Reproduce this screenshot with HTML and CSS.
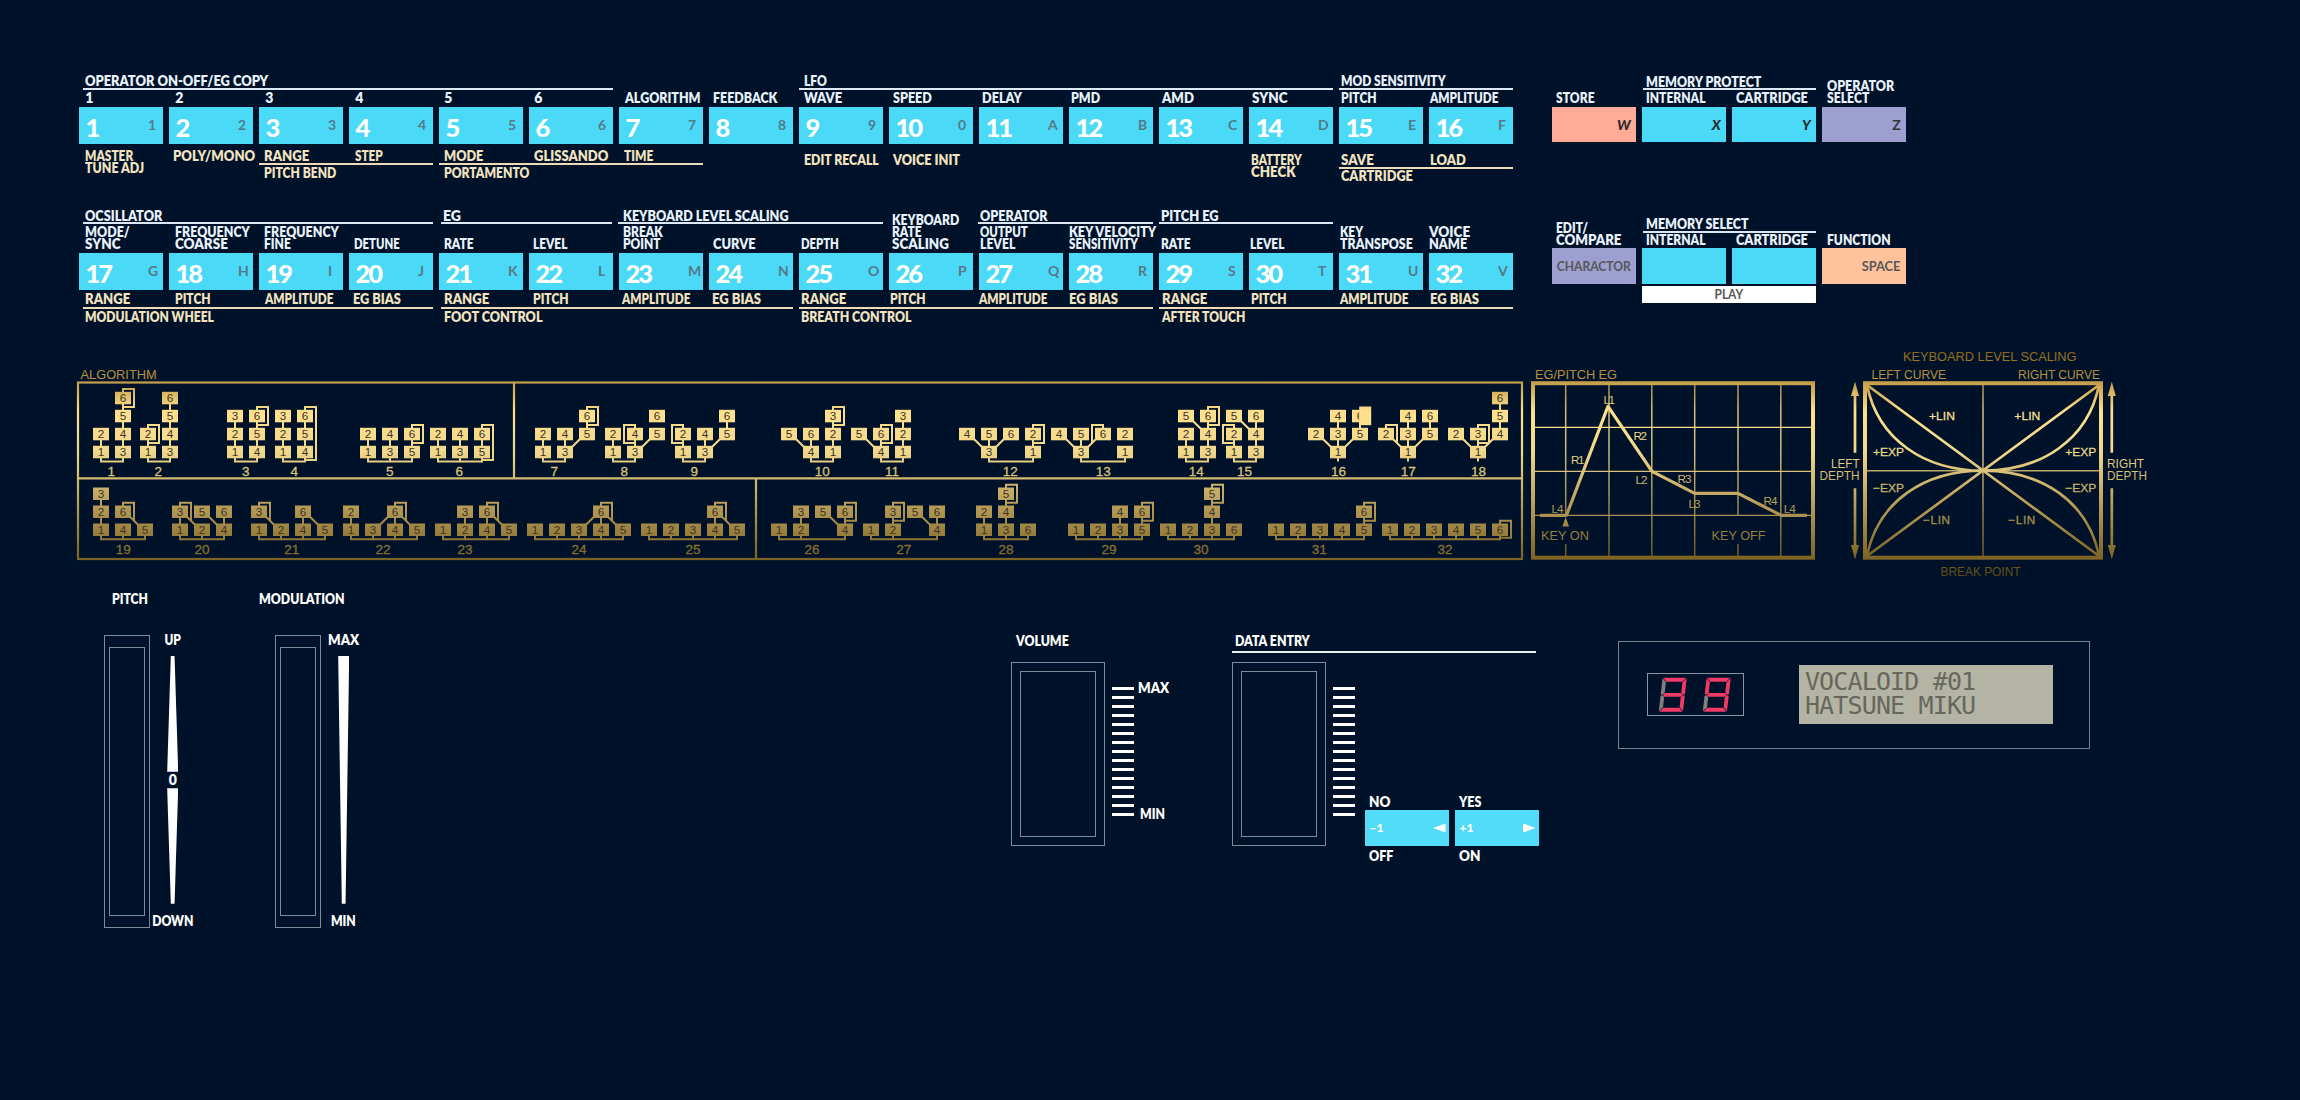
FILE: index.html
```html
<!DOCTYPE html>
<html lang="en">
<head>
<meta charset="utf-8">
<title>Synth panel</title>
<link rel="stylesheet" href="styles.css">
</head>
<body>
<main class="panel">
  <section class="controls">
    <div class="bank">
      <div class="row row-1" id="row1"></div>
      <div class="row row-2" id="row2"></div>
    </div>
    <div class="side">
      <div class="row side-1">
        <div class="strip heads">
          <div class="group g-2-3"><span class="t" data-w="113.7">MEMORY PROTECT</span></div>
        </div>
        <div class="strip labels">
          <div class="cell c1"><span class="t" data-w="37.3">STORE</span></div>
          <div class="cell c2"><span class="t" data-w="57.7">INTERNAL</span></div>
          <div class="cell c3"><span class="t" data-w="70.3">CARTRIDGE</span></div>
          <div class="cell c4"><span class="t" data-w="65.3">OPERATOR</span><span class="t" data-w="41">SELECT</span></div>
        </div>
        <div class="strip keys">
          <button class="key salmon"><span class="code slant">W</span></button>
          <button class="key"><span class="code slant">X</span></button>
          <button class="key"><span class="code slant">Y</span></button>
          <button class="key violet"><span class="code dark">Z</span></button>
        </div>
      </div>
      <div class="row side-2">
        <div class="strip heads">
          <div class="group g-2-3"><span class="t" data-w="101.3">MEMORY SELECT</span></div>
        </div>
        <div class="strip labels">
          <div class="cell c1"><span class="t" data-w="30">EDIT/</span><span class="t" data-w="63.7">COMPARE</span></div>
          <div class="cell c2"><span class="t" data-w="57.7">INTERNAL</span></div>
          <div class="cell c3"><span class="t" data-w="70.3">CARTRIDGE</span></div>
          <div class="cell c4"><span class="t" data-w="62.3">FUNCTION</span></div>
        </div>
        <div class="strip keys">
          <button class="key violet"><span class="code" data-w="72.7">CHARACTOR</span></button>
          <button class="key"></button>
          <button class="key"></button>
          <button class="key peach"><span class="code" data-w="36.7">SPACE</span></button>
        </div>
        <div class="play"><span class="code" data-w="27.3">PLAY</span></div>
      </div>
    </div>
  </section>

  <section class="charts">
    <svg class="chart" id="algorithms" width="1450" height="240" viewBox="76 345 1450 240">
      <defs>
        <linearGradient id="gold" gradientUnits="userSpaceOnUse" x1="0" y1="345" x2="0" y2="575">
          <stop offset="0" stop-color="#7d5a0a"/>
          <stop offset=".17" stop-color="#c8a24e"/>
          <stop offset=".29" stop-color="#ffe08c"/>
          <stop offset=".46" stop-color="#f2d88c"/>
          <stop offset=".94" stop-color="#7a6022"/>
          <stop offset="1" stop-color="#5f4712"/>
        </linearGradient>
      </defs>
      <text class="gt" x="80.6" y="378.7" textLength="76" lengthAdjust="spacingAndGlyphs">ALGORITHM</text>
      <g class="frame">
        <rect x="78" y="382.5" width="1444" height="176.5"/>
        <path d="M78 478.3H1522M514 382V478M756 478V559"/>
      </g>
    </svg>
    <svg class="chart" width="290" height="240" viewBox="1526 345 290 240">
      <g class="frame thick"><rect x="1533" y="383.2" width="280" height="174.5"/></g>
      <path class="grid" d="M1565.7 385V515M1565.7 544V556M1609 385V556M1651.8 385V556M1694.7 385V556M1738 385V515M1738 544V556M1780.8 385V556"/>
      <path class="grid fine" d="M1535 427.3H1811M1535 471.3H1811M1535 515.3H1811"/>
      <path class="curve" d="M1540 515.3H1566.5L1608 406.3L1652 471.3L1694.7 493.3H1738L1781 515.3H1807"/>
      <path class="solid" d="M1565.7 517L1569 526.5H1562.4Z"/>
      <text class="gt" x="1535" y="378.7" textLength="82" lengthAdjust="spacingAndGlyphs">EG/PITCH EG</text>
      <text class="gs" x="1571" y="464" textLength="13.5">R1</text>
      <text class="gs" x="1603.5" y="403.5" textLength="11.5">L1</text>
      <text class="gs" x="1633.5" y="439.6" textLength="13.5">R2</text>
      <text class="gs" x="1635.5" y="484" textLength="12">L2</text>
      <text class="gs" x="1677.5" y="482.7" textLength="14">R3</text>
      <text class="gs" x="1688.5" y="507.6" textLength="12">L3</text>
      <text class="gs" x="1763.5" y="505" textLength="14">R4</text>
      <text class="gs" x="1551.5" y="513" textLength="12">L4</text>
      <text class="gs" x="1783.7" y="513" textLength="12">L4</text>
      <text class="gt" x="1541" y="539.7" textLength="48" lengthAdjust="spacingAndGlyphs">KEY ON</text>
      <text class="gt" x="1711.5" y="539.7" textLength="54" lengthAdjust="spacingAndGlyphs">KEY OFF</text>
    </svg>
    <svg class="chart" width="334" height="240" viewBox="1816 345 334 240">
      <g class="frame thick"><rect x="1865" y="383.2" width="236" height="174.5"/></g>
      <path class="grid" d="M1983 385V556M1867 470.7H2099"/>
      <path class="curve lin" d="M1867 385L2099 556M2099 385L1867 556"/>
      <path class="curve lin" d="M1867 385C1878 440 1925 470.7 1983 470.7C2041 470.7 2088 440 2099 385M1867 556C1878 501 1925 470.7 1983 470.7C2041 470.7 2088 501 2099 556"/>
      <path class="curve lin" d="M1855 394V452.7M1855 488.3V547M2111.8 394V452.7M2111.8 488.3V547"/>
      <path class="solid" d="M1855 381.5L1859 396H1851ZM1855 559.5L1859 545H1851ZM2111.8 381.5L2115.8 396H2107.8ZM2111.8 559.5L2115.8 545H2107.8Z"/>
      <text class="gt" x="1903" y="360.7" textLength="173.5" lengthAdjust="spacingAndGlyphs">KEYBOARD LEVEL SCALING</text>
      <text class="gt" x="1871.5" y="378.7" textLength="74.5" lengthAdjust="spacingAndGlyphs">LEFT CURVE</text>
      <text class="gt" x="2018" y="378.7" textLength="82" lengthAdjust="spacingAndGlyphs">RIGHT CURVE</text>
      <text class="gs em" x="1929" y="420.3" textLength="26" lengthAdjust="spacingAndGlyphs">+LIN</text>
      <text class="gs em" x="2014.3" y="420.3" textLength="26" lengthAdjust="spacingAndGlyphs">+LIN</text>
      <text class="gs em" x="1873" y="456" textLength="31" lengthAdjust="spacingAndGlyphs">+EXP</text>
      <text class="gs em" x="2065.3" y="456" textLength="31" lengthAdjust="spacingAndGlyphs">+EXP</text>
      <text class="gs em" x="1873" y="492" textLength="31" lengthAdjust="spacingAndGlyphs">−EXP</text>
      <text class="gs em" x="2065.3" y="492" textLength="31" lengthAdjust="spacingAndGlyphs">−EXP</text>
      <text class="gs em" x="1923" y="523.7" textLength="27">−LIN</text>
      <text class="gs em" x="2008.3" y="523.7" textLength="27">−LIN</text>
      <text class="gt" x="1831" y="467.7" textLength="28.6" lengthAdjust="spacingAndGlyphs">LEFT</text>
      <text class="gt" x="1819.5" y="479.7" textLength="40" lengthAdjust="spacingAndGlyphs">DEPTH</text>
      <text class="gt" x="2107" y="467.7" textLength="37" lengthAdjust="spacingAndGlyphs">RIGHT</text>
      <text class="gt" x="2107" y="479.7" textLength="40" lengthAdjust="spacingAndGlyphs">DEPTH</text>
      <text class="gt" x="1940.5" y="575.7" textLength="80" lengthAdjust="spacingAndGlyphs">BREAK POINT</text>
    </svg>
  </section>

  <section class="performance">
    <div class="wheel">
      <h2 class="t wheel-title pitch-title" data-w="34.7">PITCH</h2>
      <div class="wheel-body">
        <div class="slot tall"><div class="slot-in"></div></div>
        <div class="scale">
          <span class="t mid" data-w="14.5">UP</span>
          <div class="wedge up"></div>
          <span class="t zero">0</span>
          <div class="wedge down"></div>
          <span class="t mid end" data-w="40">DOWN</span>
        </div>
      </div>
    </div>
    <div class="wheel second">
      <h2 class="t wheel-title mod-title" data-w="83.6">MODULATION</h2>
      <div class="wheel-body">
        <div class="slot tall"><div class="slot-in"></div></div>
        <div class="scale">
          <span class="t mid" data-w="29.4">MAX</span>
          <div class="wedge full"></div>
          <span class="t mid end" data-w="23.5">MIN</span>
        </div>
      </div>
    </div>
    <div class="slider volume">
      <h2 class="t" data-w="51">VOLUME</h2>
      <div class="slider-body">
        <div class="slot"><div class="slot-in"></div></div>
        <div class="ticks"></div>
        <div class="range"><span class="t" data-w="29.4">MAX</span><span class="t min" data-w="23.6">MIN</span></div>
      </div>
    </div>
    <div class="slider entry">
      <div class="entry-head"><h2 class="t" data-w="73.3">DATA ENTRY</h2></div>
      <div class="slider-body">
        <div class="slot"><div class="slot-in"></div></div>
        <div class="ticks"></div>
        <div class="answers">
          <div class="answer">
            <span class="t" data-w="19.5">NO</span>
            <button class="key"><span class="step">−1</span><i class="arrow left"></i></button>
            <span class="t" data-w="22.5">OFF</span>
          </div>
          <div class="answer">
            <span class="t" data-w="20.7">YES</span>
            <button class="key"><span class="step">+1</span><i class="arrow right"></i></button>
            <span class="t" data-w="19.5">ON</span>
          </div>
        </div>
      </div>
    </div>
    <div class="display">
      <div class="led">
        <svg width="95" height="41" viewBox="0 0 95 41">
          <g transform="translate(14.2 3.8) skewX(-6.5)">
            <path class="lit" d="M1 0H24L20.5 4H4.5ZM24.600 .5V16.300L22.500 17L20.800 15V4.500ZM4.500 15.300H20.500L22.300 17.200L20.500 19H4.500L2.700 17.200ZM24.600 18V33.500L20.800 29.500V19.300L22.500 17.500ZM1 34H24L20.500 30H4.500Z"/>
            <path class="off" d="M.4 .5V16.300L2.200 17L4.200 15V4.500ZM.4 18V33.500L4.200 29.500V19.300L2.200 17.500Z"/>
          </g>
          <g transform="translate(58.2 3.8) skewX(-6.5)">
            <path class="lit" d="M1 0H24L20.500 4H4.500ZM24.600 .5V16.300L22.500 17L20.800 15V4.500ZM4.500 15.300H20.500L22.300 17.200L20.500 19H4.500L2.700 17.200ZM24.600 18V33.500L20.800 29.500V19.300L22.500 17.500ZM1 34H24L20.500 30H4.500ZM.4 .5V16.300L2.200 17L4.200 15V4.500Z"/>
            <path class="off" d="M.4 18V33.500L4.200 29.500V19.300L2.200 17.500Z"/>
          </g>
        </svg>
      </div>
      <div class="lcd"><div>VOCALOID #01</div><div>HATSUNE MIKU</div></div>
    </div>
  </section>
</main>
<script src="panel.js"></script>
</body>
</html>
```
FILE: styles.css
```css
* { box-sizing: border-box; }

body {
  margin: 0;
  background: #001229;
  color: #fff;
  font-family: Lato, "Liberation Sans", sans-serif;
}

.panel { width: 2300px; height: 1100px; overflow: hidden; padding-top: 60px; }

.t {
  display: block;
  width: max-content;
  margin: 0;
  font-size: 14px;
  font-weight: 800;
  line-height: 12px;
  white-space: nowrap;
  transform-origin: 0 50%;
}
.t.mid { transform-origin: 50% 50%; }

/* key banks */
.controls { display: flex; height: 285px; }
.bank { margin-left: 79px; width: 1434px; }
.side { margin-left: 38.700px; width: 354.300px; }
.row { color: #e9f2fc; }

.strip { display: grid; grid-template-columns: repeat(16, 84px); column-gap: 6px; }
.side .strip { grid-template-columns: repeat(4, 84.300px); column-gap: 5.700px; }

.strip.heads { height: 30px; align-items: end; }
.strip.labels { height: 17px; align-items: end; padding-bottom: 3px; }
.strip.labels .cell { display: flex; flex-direction: column; justify-content: flex-end; height: 12px; }
.group { grid-row: 1; border-bottom: 2px solid #dce8f4; padding-bottom: 1px; }
.cell { grid-row: 1; }
.row-2 .heads .group { padding-bottom: 0; }
.row-2 { padding-top: 20px; }
.row-2 .strip.heads { height: 20.500px; }
.row-2 .strip.labels { height: 29.500px; }
.row-1 { height: 123px; }

.strip.lower { height: 19.700px; color: #f3e3c0; padding-top: 6px; }
.row-2 .strip.lower { height: 17.700px; padding-top: 3.500px; }
.strip.feet { color: #f3e3c0; }
.feet .group { border-bottom: 0; border-top: 2px solid #ecdcb8; padding: 2px 0 0; }
.cell.drop { padding-top: 4px; }
.feet .group.drop { margin-top: 3.800px; padding-top: 1px; }

.key {
  display: flex;
  align-items: center;
  height: 36.500px;
  margin: 0;
  padding: 0;
  border: 0;
  background: #4ad9f6;
  color: #fff;
  font-family: inherit;
}
.key .num { width: 62px; padding-left: 6.500px; margin-top: 3px; font-size: 25.500px; font-weight: 900; line-height: 30px; text-align: left; letter-spacing: -2px; }
.key .tag { width: 22px; padding-left: 7px; text-align: left; font-size: 14px; font-weight: 700; line-height: 18px; color: #56798a; }

.side .key { height: 35.400px; justify-content: flex-end; padding-right: 5.300px; }
.side .violet { background: #9c9fcf; }
.side .salmon { background: #ffab95; }
.side .peach { background: #ffc29a; }
.code { display: block; font-size: 14px; font-weight: 700; line-height: 16px; color: #57565a; white-space: nowrap; transform-origin: 100% 50%; }
.code.slant { color: #2a2c30; font-style: italic; font-weight: 900; }
.code.dark { color: #35353c; }

.c1 { grid-column: 1; padding-left: 4px; }
.c2 { grid-column: 2; padding-left: 4px; }
.c3 { grid-column: 3; padding-left: 4px; }
.c4 { grid-column: 4; padding-left: 5px; }
.g-2-3 { grid-column: 2 / span 2; margin-left: 1px; padding-left: 3px; }
.side-1 .heads .group { padding-bottom: .5px; }
.side-1 { height: 82.300px; }
.side-2 { padding-top: 60.500px; }
.side-2 .heads { height: 29.800px; }
.side-2 .labels { height: 15.700px; padding-bottom: 2.300px; }
.play {
  display: flex;
  align-items: center;
  justify-content: center;
  margin: 2.500px 0 0 90px;
  width: 174.500px;
  height: 16.500px;
  background: #fff;
}
.play .code { transform-origin: 50% 50%; }

/* gold charts */
.charts { display: flex; height: 240px; padding-left: 76px; }
.chart { display: block; flex: none; font-family: "Liberation Sans", Arial, sans-serif; }
.frame { fill: none; stroke: url(#gold); stroke-width: 2.200; }
.frame.thick { stroke-width: 4; }
.grid { fill: none; stroke: url(#gold); stroke-width: 1.500; opacity: .85; }
.grid.fine { stroke-width: 1.200; opacity: 1; }
.curve { fill: none; stroke: url(#gold); stroke-width: 3.200; stroke-linejoin: round; }
.curve.lin { stroke-width: 2.700; }
.solid { fill: url(#gold); }
.gt { font-size: 13.500px; fill: url(#gold); }
.gs { font-size: 11.700px; fill: url(#gold); }
.gs.em { stroke: url(#gold); stroke-width: .3; }
.wire { fill: none; stroke: url(#gold); stroke-width: 2; }
.op { fill: url(#gold); }
.opn { font-size: 11.700px; fill: #38352a; text-anchor: middle; }
.aln { font-size: 13.500px; fill: url(#gold); stroke: url(#gold); stroke-width: .3; text-anchor: middle; }

/* wheels and sliders */
.performance { display: flex; align-items: flex-start; height: 400px; }
.wheel { width: 171px; margin-left: 103.700px; padding-top: 7.700px; }
.wheel.second { margin-left: 0; }
.pitch-title { margin-left: 8px; }
.mod-title { margin-left: -16px; }
.wheel-body { display: flex; margin-top: 30.500px; }
.slot { flex: none; width: 93.200px; height: 184px; padding: 8px 7.500px; border: 1px solid #7e8a98; }
.slot-in { height: 100%; border: 1px solid #7e8a98; }
.slot.tall { width: 46.500px; height: 292.500px; padding: 11px 4.500px; }
.scale { display: flex; flex-direction: column; align-items: center; width: 40px; height: 293px; margin: -1.200px 0 0 2.500px; }
.wedge { width: 11px; background: #fff; margin-top: 10px; height: 115.700px; }
.wedge.up { clip-path: polygon(33% 0, 67% 0, 100% 100%, 0 100%); }
.wedge.down { margin-top: 2.600px; height: 115.400px; clip-path: polygon(0 0, 100% 0, 67% 100%, 33% 100%); }
.wedge.full { height: 247.700px; clip-path: polygon(0 0, 100% 0, 67% 100%, 33% 100%); }
.zero { margin-top: 2px; }
.scale .end { margin-top: 11.300px; }

.slider { padding-top: 50px; }
.slider.volume { width: 221px; margin-left: 565.700px; }
.volume h2 { margin-left: 5px; }
.volume .slider-body { margin-top: 15px; }
.slider.entry { width: 386px; }
.entry-head { width: 304px; padding: 0 0 3.500px 2.500px; border-bottom: 2.300px solid #eceef0; }
.entry .slider-body { margin-top: 9.500px; }
.slider-body { display: flex; }
.ticks {
  flex: none;
  width: 22px;
  height: 129px;
  margin: 25px 0 0 7px;
  background: repeating-linear-gradient(#fff 0 3px, transparent 3px 9px);
}
.range { margin: 19.700px 0 0 4px; }
.range .min { margin: 114px 0 0 2.500px; }
.answers { display: flex; gap: 5.300px; margin: 134px 0 0 10px; }
.answer .t { margin-left: 4.500px; }
.answer .key { justify-content: space-between; width: 84.700px; height: 36px; margin: 2px 0 3.700px; padding: 0 3.700px 0 5px; background: #52dcf8; }
.step { font-size: 12px; font-weight: 900; line-height: 14px; }
.arrow { width: 12.500px; height: 9px; background: #fff; }
.arrow.left { clip-path: polygon(0 50%, 100% 0, 100% 100%); }
.arrow.right { clip-path: polygon(0 0, 100% 50%, 0 100%); }

/* displays */
.display {
  display: flex;
  align-items: flex-start;
  width: 471.500px;
  height: 107.500px;
  margin-top: 56px;
  border: 1px solid #77828f;
}
.led { width: 97px; height: 43px; margin: 31px 0 0 28px; border: 1px solid #8894a0; }
.led svg { display: block; }
.lit { fill: #f23a68; }
.off { fill: #80807e; }
.lcd {
  width: 254px;
  height: 58.500px;
  margin: 23px 0 0 54.500px;
  padding: 5px 0 0 6px;
  background: #b4b4a4;
  color: #67675b;
  font: 25px/24px "DejaVu Sans Mono", "Liberation Mono", monospace;
  letter-spacing: -.85px;
  white-space: pre;
}
```
FILE: panel.js
```js
// Labels are [column, indent, [line, width], ...]; groups are [column, span, text, left, width, indent, text width].
const ROWS = {
  row1: {
    first: 1,
    tags: '1234567890ABCDEF',
    heads: [[1, 6, 'OPERATOR ON-OFF/EG COPY', 4.2, 530, 2.4, 181.7], [9, 6, 'LFO', 0, 534, 5.7, 21.7], [15, 2, 'MOD SENSITIVITY', 0, 174, 2.4, 103.4]],
    labels: [
      [1, 7, ['1']], [2, 7, ['2']], [3, 7, ['3']], [4, 7, ['4']], [5, 6, ['5']], [6, 6, ['6']],
      [7, 6.6, ['ALGORITHM', 74]], [8, 4.7, ['FEEDBACK', 63.2]], [9, 5.7, ['WAVE', 36.3]], [10, 4.9, ['SPEED', 36.8]],
      [11, 3.6, ['DELAY', 38.2]], [12, 2.8, ['PMD', 27.4]], [13, 3.4, ['AMD', 30.2]], [14, 4, ['SYNC', 34]],
      [15, 2.6, ['PITCH', 34.4]], [16, 1.4, ['AMPLITUDE', 67]]
    ],
    lower: [
      [1, 6.6, ['MASTER', 46.7], ['TUNE ADJ', 57.6]], [2, 4.4, ['POLY/MONO', 80.2]], [3, 5.9, ['RANGE', 43.4]],
      [4, 7, ['STEP', 26]], [5, 5.3, ['MODE', 38.2]], [6, 5.3, ['GLISSANDO', 72.7]], [7, 6.2, ['TIME', 27.4]],
      [9, 5.7, ['EDIT RECALL', 73]], [10, 4.4, ['VOICE INIT', 65.6]], [14, 2.6, ['BATTERY', 49], ['CHECK', 43]],
      [15, 2.4, ['SAVE', 31.6]], [16, 1.4, ['LOAD', 34.5]]
    ],
    feet: [[3, 2, 'PITCH BEND', 0, 174, 5.9, 70.8], [5, 3, 'PORTAMENTO', 0, 264, 5.8, 84], [15, 2, 'CARTRIDGE', 0, 174, 2.4, 70.3]]
  },
  row2: {
    first: 17,
    tags: 'GHIJKLMNOPQRSTUV',
    heads: [[1, 4, 'OCSILLATOR', 4.2, 350, 2.4, 75.5], [5, 2, 'EG', 1.5, 171, 3.3, 16.5], [7, 3, 'KEYBOARD LEVEL SCALING', -.6, 264.6, 5.3, 164],
      [11, 2, 'OPERATOR', -.7, 174.3, 2.9, 65.6], [13, 2, 'PITCH EG', 0, 174, 2.5, 56.2]],
    labels: [
      [1, 6.6, ['MODE/', 43], ['SYNC', 34]], [2, 6.7, ['FREQUENCY', 73], ['COARSE', 51.4]], [3, 5.9, ['FREQUENCY', 73], ['FINE', 25]],
      [4, 6.1, ['DETUNE', 44.4]], [5, 6.2, ['RATE', 28.3]], [6, 5, ['LEVEL', 33]], [7, 5.2, ['BREAK', 37.8], ['POINT', 35.9]],
      [8, 4.7, ['CURVE', 40.6]], [9, 2.8, ['DEPTH', 36.3]], [10, 3.9, ['KEYBOARD', 66], ['RATE', 28.3], ['SCALING', 55.7]],
      [11, 2.2, ['OUTPUT', 45.8], ['LEVEL', 34]], [12, .5, ['KEY VELOCITY', 85.4], ['SENSITIVITY', 67.5]], [13, 3, ['RATE', 28.3]],
      [14, 1.7, ['LEVEL', 33]], [15, 2.2, ['KEY', 21.2], ['TRANSPOSE', 70.8]], [16, .5, ['VOICE', 40], ['NAME', 36.3]]
    ],
    lower: [
      [1, 6.6, ['RANGE', 43.4]], [2, 6.7, ['PITCH', 34.4]], [3, 6.4, ['AMPLITUDE', 67]], [4, 5.2, ['EG BIAS', 46.7]],
      [5, 5.7, ['RANGE', 43.4]], [6, 4.5, ['PITCH', 34.4]], [7, 3.8, ['AMPLITUDE', 67]], [8, 3.8, ['EG BIAS', 47.7]],
      [9, 2.8, ['RANGE', 43.4]], [10, 1.6, ['PITCH', 34.4]], [11, .8, ['AMPLITUDE', 67]], [12, .5, ['EG BIAS', 47.7]],
      [13, 3.9, ['RANGE', 43.4]], [14, 2.6, ['PITCH', 34.4]], [15, 1.9, ['AMPLITUDE', 67]], [16, 1.4, ['EG BIAS', 47.7]]
    ],
    feet: [[1, 4, 'MODULATION WHEEL', 4.2, 350, 2.4, 127.4], [5, 4, 'FOOT CONTROL', 1.5, 352.5, 4.2, 96.7],
      [9, 4, 'BREATH CONTROL', 0, 354, 2.4, 109], [13, 4, 'AFTER TOUCH', 0, 354, 3.4, 82]]
  }
};

const text = (s, w) => `<span class="t"${w ? ` data-w="${w}"` : ''}>${s}</span>`;
const dropped = (id, col) => (id === 'row1' && col >= 9 ? ' drop' : '');
const inset = pad => Math.max(0, pad - .8);

for (const [id, r] of Object.entries(ROWS)) {
  const group = ([col, span, s, left, width, pad, w], cls) =>
    `<div class="group${cls}" style="grid-column:${col}/span ${span};margin-left:${left}px;width:${width}px;padding-left:${inset(pad)}px">${text(s, w)}</div>`;
  const cell = ([col, pad, ...lines], cls) =>
    `<div class="cell${cls}" style="grid-column:${col};padding-left:${inset(pad)}px">${lines.map(l => text(...l)).join('')}</div>`;
  document.getElementById(id).innerHTML =
    `<div class="strip heads">${r.heads.map(g => group(g, '')).join('')}</div>` +
    `<div class="strip labels">${r.labels.map(c => cell(c, '')).join('')}</div>` +
    `<div class="strip keys">${[...r.tags].map((t, i) =>
      `<button class="key"><span class="num">${r.first + i}</span><span class="tag">${t}</span></button>`).join('')}</div>` +
    `<div class="strip lower">${r.lower.map(c => cell(c, dropped(id, c[0]))).join('')}</div>` +
    `<div class="strip feet">${r.feet.map(g => group(g, dropped(id, g[0]))).join('')}</div>`;
}

// Condense or widen each label to its printed width.
for (const el of document.querySelectorAll('[data-w]')) {
  const scale = (Number(el.dataset.w) + 1.6) / el.offsetWidth;
  el.style.transform = `scaleX(${scale.toFixed(4)})`;
}

// Algorithms: n number, at label x, x first column, cols = operators bottom-up per column ('.' = empty),
// d = diagonals [fromCol, fromLevel, toCol], fb = feedback [col, level, kind], bus = [firstCol, lastCol].
const ALGS = [
  { n: 1, at: 111.3, x: 101, cols: ['12', '3456'], fb: [1, 3, 'r'] },
  { n: 2, at: 158.3, x: 148, cols: ['12', '3456'], fb: [0, 1, 'r'] },
  { n: 3, at: 245.7, x: 235, cols: ['123', '456'], fb: [1, 2, 'r'] },
  { n: 4, at: 294.3, x: 283, cols: ['123', '456'], fb: [1, 2, 'long'] },
  { n: 5, at: 389.7, x: 368, cols: ['12', '34', '56'], fb: [2, 1, 'r'] },
  { n: 6, at: 459.3, x: 438, cols: ['12', '34', '56'], fb: [2, 1, 'long'] },
  { n: 7, at: 554.3, x: 543, cols: ['12', '34', '.56'], d: [[2, 1, 1]], fb: [2, 2, 'r'], bus: [0, 1] },
  { n: 8, at: 624.3, x: 613, cols: ['12', '34', '.56'], d: [[2, 1, 1]], fb: [1, 1, 'l'], bus: [0, 1], cut: [2] },
  { n: 9, at: 694.3, x: 683, cols: ['12', '34', '.56'], d: [[2, 1, 1]], fb: [0, 1, 'l'], bus: [0, 1] },
  { n: 10, at: 822.3, x: 789, cols: ['.5', '46', '123'], d: [[0, 1, 1]], fb: [2, 2, 'r'], bus: [1, 2] },
  { n: 11, at: 892, x: 859, cols: ['.5', '46', '123'], d: [[0, 1, 1]], fb: [1, 1, 'r'], bus: [1, 2] },
  { n: 12, at: 1010.3, x: 967, cols: ['.4', '35', '.6', '12'], d: [[0, 1, 1], [2, 1, 1]], fb: [3, 1, 'r'], bus: [1, 3] },
  { n: 13, at: 1103.3, x: 1059, cols: ['.4', '35', '.6', '12'], d: [[0, 1, 1], [2, 1, 1]], fb: [2, 1, 'lo'], bus: [1, 3], cut: [3] },
  { n: 14, at: 1196.3, x: 1186, cols: ['125', '346'], d: [[0, 2, 1]], fb: [1, 2, 'r'], cutTop: [0] },
  { n: 15, at: 1244.6, x: 1234, cols: ['125', '346'], d: [[0, 2, 1]], fb: [0, 1, 'l'], cutTop: [0] },
  { n: 16, at: 1338.6, x: 1316, cols: ['.2', '134', '.56'], d: [[0, 1, 1], [2, 1, 1]], fb: [2, 2, 'block'], bus: [1, 1] },
  { n: 17, at: 1408.3, x: 1386, cols: ['.2', '134', '.56'], d: [[0, 1, 1], [2, 1, 1]], fb: [0, 1, 'ro'], bus: [1, 1] },
  { n: 18, at: 1478.6, x: 1456, cols: ['.2', '13', '.456'], d: [[0, 1, 1], [2, 1, 1]], fb: [1, 1, 'r'], bus: [1, 1] },
  { n: 19, at: 123.3, x: 101, cols: ['123', '46', '5'], d: [[1, 1, 2]], fb: [1, 1, 'ro'], cut: [1] },
  { n: 20, at: 202, x: 180, cols: ['13', '25', '46'], d: [[0, 1, 1], [1, 1, 2]], fb: [0, 1, 'ro'], cut: [1] },
  { n: 21, at: 291.7, x: 259, cols: ['13', '2', '46', '5'], d: [[0, 1, 1], [2, 1, 3]], fb: [0, 1, 'ro'], cut: [0] },
  { n: 22, at: 383, x: 351, cols: ['12', '3', '46', '5'], d: [[2, 1, 1], [2, 1, 3]], fb: [2, 1, 'ro'] },
  { n: 23, at: 465, x: 443, cols: ['1', '23', '46', '5'], d: [[2, 1, 3]], fb: [2, 1, 'ro'] },
  { n: 24, at: 579, x: 535, cols: ['1', '2', '3', '46', '5'], d: [[3, 1, 2], [3, 1, 4]], fb: [3, 1, 'ro'] },
  { n: 25, at: 693, x: 649, cols: ['1', '2', '3', '46', '5'], d: [[3, 1, 4]], fb: [3, 1, 'ro'] },
  { n: 26, at: 812, x: 779, cols: ['1', '23', '.5', '46'], d: [[2, 1, 3]], fb: [3, 1, 'r'] },
  { n: 27, at: 903.7, x: 871, cols: ['1', '23', '.5', '46'], d: [[2, 1, 3]], fb: [1, 1, 'r'] },
  { n: 28, at: 1006, x: 984, cols: ['12', '345', '6'], fb: [1, 2, 'r'] },
  { n: 29, at: 1109, x: 1076, cols: ['1', '2', '34', '56'], fb: [3, 1, 'r'] },
  { n: 30, at: 1201, x: 1168, cols: ['1', '2', '345', '6'], fb: [2, 2, 'r'] },
  { n: 31, at: 1319.3, x: 1276, cols: ['1', '2', '3', '4', '56'], fb: [4, 1, 'r'] },
  { n: 32, at: 1445, x: 1390, cols: ['1', '2', '3', '4', '5', '6'], fb: [5, 0, 'long'] }
];

let art = '';
for (const a of ALGS) {
  const base = a.n < 19 ? 452 : 529.7;
  const X = c => a.x + 22 * c;
  const Y = l => base - 18 * l;
  const busY = base + 9.5;
  const [b0, b1] = a.bus || [0, a.cols.length - 1];
  let wire = '', ops = '', over = '';
  a.cols.forEach((col, c) => {
    [...col].forEach((op, l) => {
      if (op === '.') return;
      ops += `<rect class="op" x="${X(c) - 8}" y="${Y(l) - 6.2}" width="16" height="12.5"/><text class="opn" x="${X(c)}" y="${Y(l) + 4.2}">${op}</text>`;
      if (l === 0) wire += `M${X(c)} ${Y(0)}V${busY}`;
      const linked = l > 0 && col[l - 1] !== '.' && !(a.cut || []).includes(c) && !(l === 2 && (a.cutTop || []).includes(c));
      if (linked) wire += `M${X(c)} ${Y(l)}V${Y(l - 1)}`;
    });
  });
  if (b0 !== b1) wire += `M${X(b0) - 1} ${busY}H${X(b1) + 1}`;
  for (const [c, l, to] of a.d || []) {
    const s = Math.sign(to - c);
    wire += `M${X(c) + 6 * s} ${Y(l) + 4}L${X(to) - 6 * s} ${Y(l - 1) - 4}`;
  }
  const [fc, fl, kind] = a.fb;
  const x = X(fc), y = Y(fl);
  if (kind === 'r') wire += `M${x} ${y}V${y - 9}H${x + 11}V${y + 9}H${x}`;
  if (kind === 'l') wire += `M${x} ${y}V${y - 9}H${x - 11}V${y + 9}H${x}`;
  if (kind === 'ro') wire += `M${x} ${y}V${y - 9}H${x + 11}V${y + 9}`;
  if (kind === 'lo') wire += `M${x} ${y}V${y - 9}H${x - 11}V${y + 9}`;
  if (kind === 'long') wire += `M${x} ${y}V${y - 9}H${x + 11}V${busY - 1.5}H${x}`;
  if (kind === 'block') over = `<rect class="op" x="${x - .8}" y="${y - 9.5}" width="12" height="18.7"/>`;
  art += `<path class="wire" d="${wire}"/>${ops}${over}<text class="aln" x="${a.at}" y="${a.n < 19 ? 475.7 : 554}">${a.n}</text>`;
}
document.getElementById('algorithms').insertAdjacentHTML('beforeend', art);
```
